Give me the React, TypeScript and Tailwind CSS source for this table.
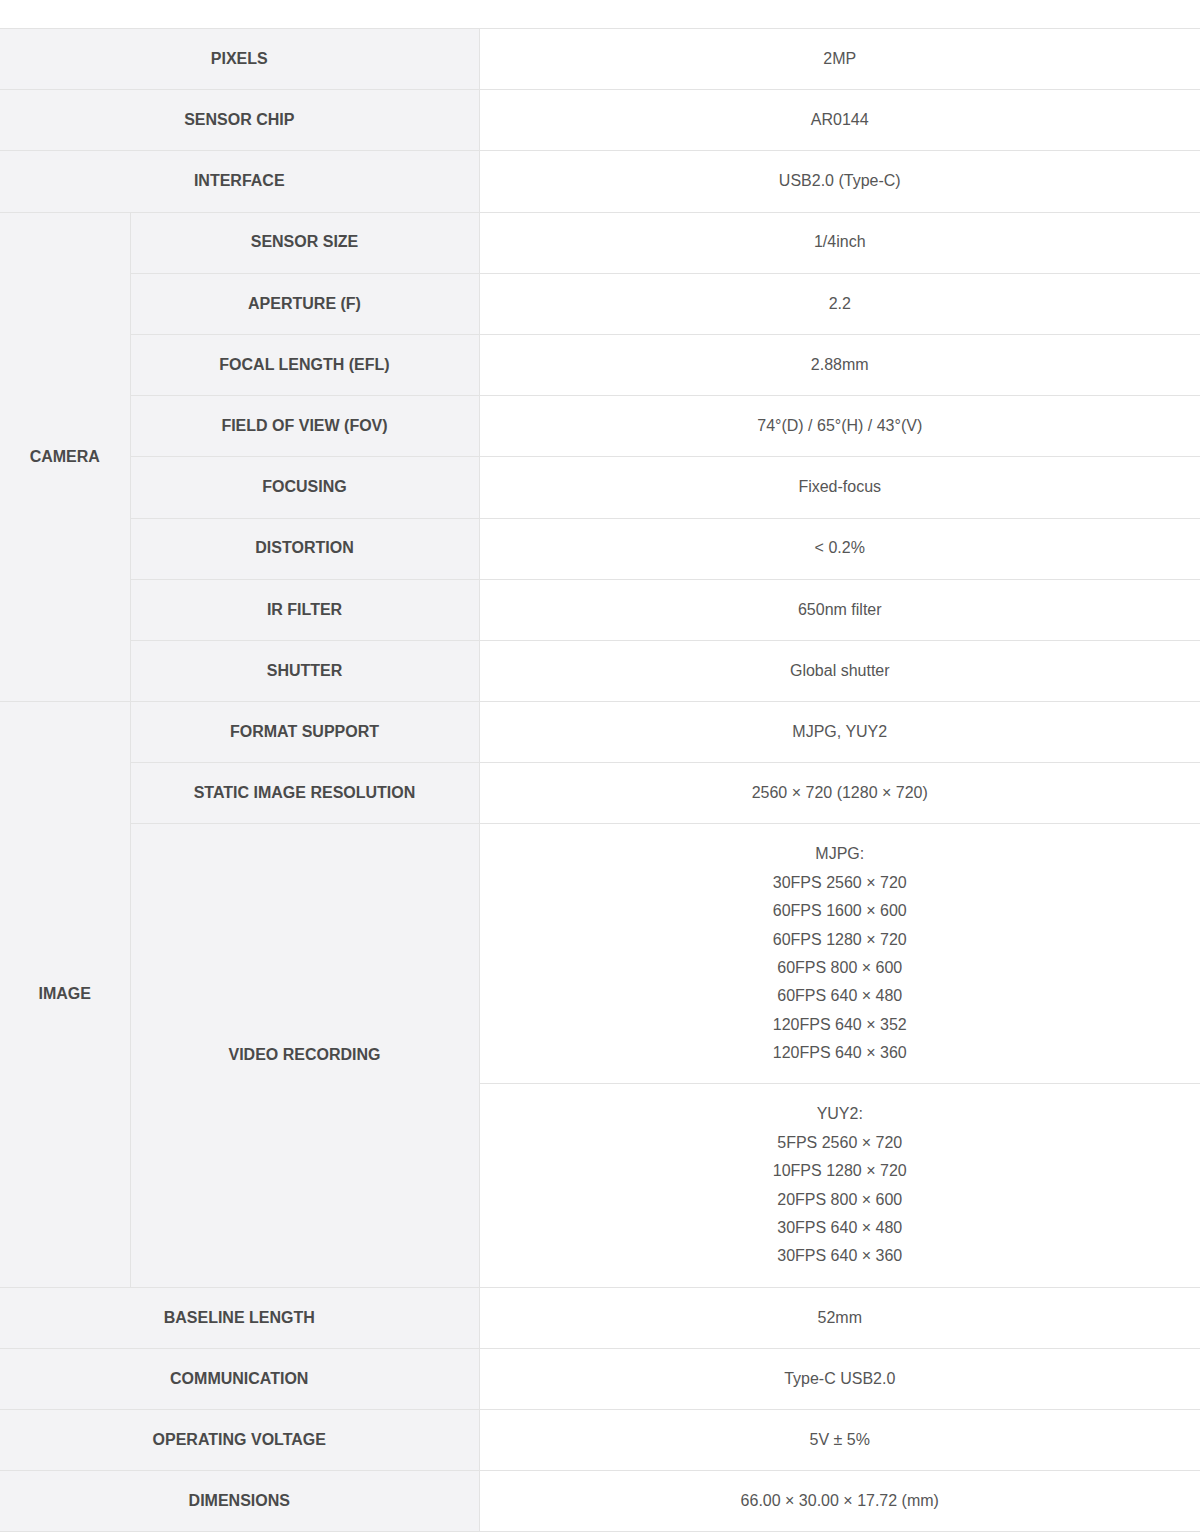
import React from 'react';

const label = 'bg-[#f3f3f5] font-bold text-[#4a4a4a] text-center align-middle py-[15.9px] border-y border-[#e3e3e3]';
const value = 'bg-white text-[#565656] text-center align-middle py-[15.9px] border-y border-l border-[#e3e3e3]';
const group = 'bg-[#f3f3f5] font-bold text-[#4a4a4a] text-center align-middle border-y border-r border-[#e3e3e3]';

const cameraRows = [
  ['SENSOR SIZE', '1/4inch'],
  ['APERTURE (F)', '2.2'],
  ['FOCAL LENGTH (EFL)', '2.88mm'],
  ['FIELD OF VIEW (FOV)', '74°(D) / 65°(H) / 43°(V)'],
  ['FOCUSING', 'Fixed-focus'],
  ['DISTORTION', '< 0.2%'],
  ['IR FILTER', '650nm filter'],
  ['SHUTTER', 'Global shutter'],
];

const mjpg = ['MJPG:', '30FPS 2560 × 720', '60FPS 1600 × 600', '60FPS 1280 × 720', '60FPS 800 × 600', '60FPS 640 × 480', '120FPS 640 × 352', '120FPS 640 × 360'];
const yuy2 = ['YUY2:', '5FPS 2560 × 720', '10FPS 1280 × 720', '20FPS 800 × 600', '30FPS 640 × 480', '30FPS 640 × 360'];

const Row = ({ name, val }: { name: string; val: string }) => (
  <tr>
    <td colSpan={2} className={label}>{name}</td>
    <td className={value}>{val}</td>
  </tr>
);

export default function App() {
  return (
    <div className="w-[1200px] bg-white pt-[28px] pb-[5px] text-[16px] leading-[28.4px] font-['Liberation_Sans',Arial,sans-serif]">
      <table className="w-full table-fixed border-collapse">
        <colgroup>
          <col className="w-[130px]" />
          <col className="w-[349px]" />
          <col className="w-[721px]" />
        </colgroup>
        <tbody>
          <Row name="PIXELS" val="2MP" />
          <Row name="SENSOR CHIP" val="AR0144" />
          <Row name="INTERFACE" val="USB2.0 (Type-C)" />
          {cameraRows.map(([n, v], i) => (
            <tr key={n}>
              {i === 0 && <td rowSpan={cameraRows.length} className={group}>CAMERA</td>}
              <td className={label}>{n}</td>
              <td className={value}>{v}</td>
            </tr>
          ))}
          <tr>
            <td rowSpan={4} className={group}>IMAGE</td>
            <td className={label}>FORMAT SUPPORT</td>
            <td className={value}>MJPG, YUY2</td>
          </tr>
          <tr>
            <td className={label}>STATIC IMAGE RESOLUTION</td>
            <td className={value}>2560 × 720 (1280 × 720)</td>
          </tr>
          <tr>
            <td rowSpan={2} className={label}>VIDEO RECORDING</td>
            <td className={value}>
              {mjpg.map((l) => <div key={l}>{l}</div>)}
            </td>
          </tr>
          <tr>
            <td className={value}>
              {yuy2.map((l) => <div key={l}>{l}</div>)}
            </td>
          </tr>
          <Row name="BASELINE LENGTH" val="52mm" />
          <Row name="COMMUNICATION" val="Type-C USB2.0" />
          <Row name="OPERATING VOLTAGE" val="5V ± 5%" />
          <Row name="DIMENSIONS" val="66.00 × 30.00 × 17.72 (mm)" />
        </tbody>
      </table>
    </div>
  );
}
